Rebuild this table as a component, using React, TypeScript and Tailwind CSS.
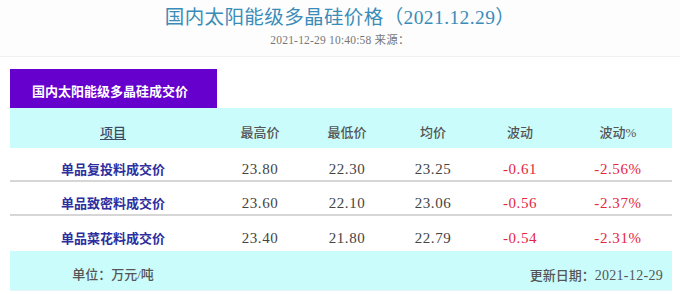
import * as React from "react";

const serif = "font-['Liberation_Serif','Noto_Sans_CJK_SC',serif]";

const rows = [
  { name: "单品复投料成交价", high: "23.80", low: "22.30", avg: "23.25", chg: "-0.61", pct: "-2.56%" },
  { name: "单品致密料成交价", high: "23.60", low: "22.10", avg: "23.06", chg: "-0.56", pct: "-2.37%" },
  { name: "单品菜花料成交价", high: "23.40", low: "21.80", avg: "22.79", chg: "-0.54", pct: "-2.31%" },
];

const cols = "grid grid-cols-[206px_88px_86px_86px_88px_108px]";

export default function App() {
  return (
    <div className={`w-[680px] h-[294px] overflow-hidden bg-white ${serif}`}>
      {/* page heading */}
      <div className="h-[57px] flex flex-col items-center border-b border-[#f0f0f0] bg-[#fdfdfd]">
        <h1 className="mt-[6px] text-[19.5px] leading-[24px] text-[#3a8cb8] tracking-[0.4px]">
          国内太阳能级多晶硅价格（2021.12.29）
        </h1>
        <div className="mt-[3px] text-[11.5px] leading-[14px] text-[#777] tracking-[0.2px]">2021-12-29 10:40:58 来源：</div>
      </div>

      {/* tab */}
      <div className="mt-[12px] ml-[10px] w-[207px] h-[39px] bg-[#6600cc] pl-[22px] pt-[15px] text-[13px] leading-[16px] font-bold text-white">
        国内太阳能级多晶硅成交价
      </div>

      {/* table */}
      <div className="ml-[10px] w-[662px]">
        <div className={`${cols} h-[40px] bg-[#cbfcfc] pt-[9px] items-center text-[13px] font-medium text-[#555]`}>
          <div className="text-center">
            <span className="underline underline-offset-2 text-[#3d4a66]">项目</span>
          </div>
          <div className="text-center">最高价</div>
          <div className="text-center">最低价</div>
          <div className="text-center">均价</div>
          <div className="text-center">波动</div>
          <div className="text-center">波动%</div>
        </div>

        {rows.map((r, i) => (
          <div
            key={r.name}
            className={`${cols} items-center pt-[10px] text-[15px] tracking-[0.6px] ${i < 2 ? "h-[34px] border-b-2 border-[#d6d6d6]" : "h-[35px]"}`}
          >
            <div className="text-center text-[13px] tracking-normal font-semibold text-[#2e2e9e]">{r.name}</div>
            <div className="text-center text-[#444]">{r.high}</div>
            <div className="text-center text-[#444]">{r.low}</div>
            <div className="text-center text-[#444]">{r.avg}</div>
            <div className="text-center text-[#e5263f]">{r.chg}</div>
            <div className="text-center text-[#e5263f]">{r.pct}</div>
          </div>
        ))}

        <div className="h-[40px] bg-[#cbfcfc] pt-[9px] flex items-center justify-between pr-[9px] text-[13px] font-medium text-[#555] border-b border-[#e6f4f4]">
          <div className="w-[206px] text-center">单位：万元/吨</div>
          <div>
            更新日期：<span className="text-[14px] tracking-[0.3px]">2021-12-29</span>
          </div>
        </div>
      </div>
    </div>
  );
}
